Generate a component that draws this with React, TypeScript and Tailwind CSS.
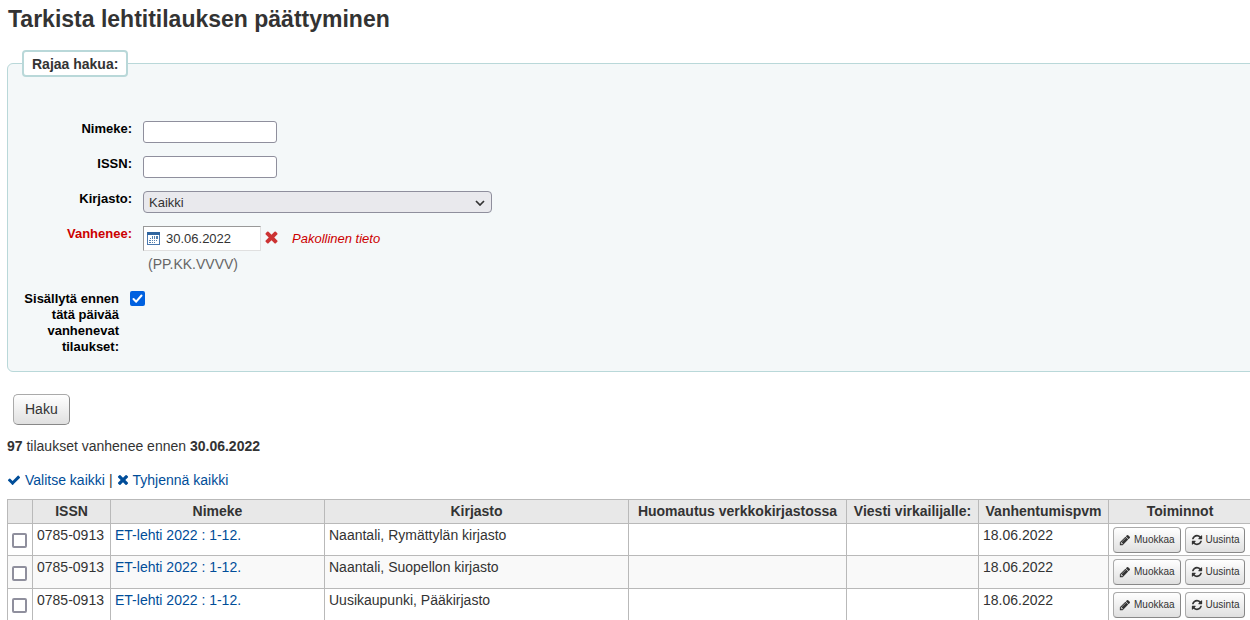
import { useState } from "react";
import type { ReactNode } from "react";

const ICONS = {
  check:
    "M1671 566q0 40-28 68l-724 724-136 136q-28 28-68 28t-68-28l-136-136-362-362q-28-28-28-68t28-68l136-136q28-28 68-28t68 28l294 295 656-657q28-28 68-28t68 28l136 136q28 28 28 68z",
  times:
    "M1490 1322q0 40-28 68l-136 136q-28 28-68 28t-68-28l-294-294-294 294q-28 28-68 28t-68-28l-136-136q-28-28-28-68t28-68l294-294-294-294q-28-28-28-68t28-68l136-136q28-28 68-28t68 28l294 294 294-294q28-28 68-28t68 28l136 136q28 28 28 68t-28 68l-294 294 294 294q28 28 28 68z",
  pencil:
    "M491 1536l91-91-235-235-91 91v107h128v128h107zm523-928q0-22-22-22-10 0-17 7l-542 542q-7 7-7 17 0 22 22 22 10 0 17-7l542-542q7-7 7-17zm-54-192l416 416-832 832h-416v-416zm683 96q0 53-37 90l-166 166-416-416 166-165q36-38 90-38 53 0 91 38l235 234q37 39 37 91z",
  refresh:
    "M1639 1056q0 5-1 7-64 268-268 434.5t-478 166.5q-146 0-282.5-55t-243.5-157l-129 129q-19 19-45 19t-45-19-19-45v-448q0-26 19-45t45-19h448q26 0 45 19t19 45-19 45l-137 137q71 66 161 102t187 36q134 0 250-65t186-179q11-17 53-117 8-23 30-23h192q13 0 22.5 9.5t9.5 22.5zm25-800v448q0 26-19 45t-45 19h-448q-26 0-45-19t-19-45 19-45l138-138q-148-137-349-137-134 0-250 65t-186 179q-11 17-53 117-8 23-30 23h-199q-13 0-22.5-9.5t-9.5-22.5v-7q65-268 270-434.5t480-166.5q146 0 284 55.5t245 156.5l130-129q19-19 45-19t45 19 19 45z",
};

function Icon({ name, className, viewBox = "0 0 1792 1792" }: { name: keyof typeof ICONS; className: string; viewBox?: string }) {
  return (
    <svg viewBox={viewBox} fill="currentColor" aria-hidden="true" className={className}>
      <path d={ICONS[name]} />
    </svg>
  );
}

function CalendarIcon() {
  return (
    <svg viewBox="0 0 13 13" aria-hidden="true" className="h-[13px] w-[13px] shrink-0" shapeRendering="crispEdges">
      <rect width="13" height="13" fill="#4a78ae" />
      <rect x="0" y="0" width="13" height="3" fill="#2f659f" />
      <rect x="1" y="3" width="11" height="9" fill="#ffffff" />
      <path
        d="M5 4h1v2h-1zM7 4h1v2h-1zM9 4h2v2h-2zM3 6h1v1h-1zM5 6h1v1h-1zM7 6h1v1h-1zM9 6h2v1h-2zM2 8h2v1h-2zM5 8h1v1h-1zM7 8h1v1h-1zM9 8h1v1h-1zM2 10h2v1h-2zM5 10h1v1h-1zM7 10h1v1h-1z"
        fill="#5580ad"
      />
    </svg>
  );
}

function Checkbox({ id, label, defaultChecked }: { id: string; label?: string; defaultChecked?: boolean }) {
  return (
    <span className="grid h-[15px] w-[15px] shrink-0">
      <input
        id={id}
        type="checkbox"
        aria-label={label}
        defaultChecked={defaultChecked}
        className="peer col-start-1 row-start-1 h-[15px] w-[15px] appearance-none rounded-[2px] border-2 border-[#8f8f9d] bg-white checked:border-[#0061e0] checked:bg-[#0061e0]"
      />
      <svg
        viewBox="0 0 15 15"
        fill="none"
        stroke="#fff"
        strokeWidth="2"
        strokeLinecap="round"
        strokeLinejoin="round"
        aria-hidden="true"
        className="pointer-events-none invisible col-start-1 row-start-1 h-[15px] w-[15px] peer-checked:visible"
      >
        <path d="M3.5 8l2.7 2.7L11.5 4.5" />
      </svg>
    </span>
  );
}

function Field({ id, label, required, children }: { id: string; label: string; required?: boolean; children: ReactNode }) {
  return (
    <li className="flex items-start gap-[11px]">
      <label
        htmlFor={id}
        className={
          required
            ? "w-[110px] shrink-0 text-right text-[13px] leading-4 font-bold text-[#cc0000]"
            : "w-[110px] shrink-0 text-right text-[13px] leading-4 font-bold text-black"
        }
      >
        {label}
      </label>
      {children}
    </li>
  );
}

const BUTTON =
  "border border-[#aaa] border-r-[#888] border-b-[#888] bg-linear-to-b from-white to-[#e0e0e0] text-[#333] hover:to-[#d0d0d0]";

function RowButton({ icon, children }: { icon: keyof typeof ICONS; children: ReactNode }) {
  return (
    <button type="button" className={`${BUTTON} flex h-[26px] items-center gap-[3px] rounded-[4px] px-[5px] text-[10px]`}>
      <Icon name={icon} className="h-3 w-3" />
      {children}
    </button>
  );
}

const COLUMNS = [
  { title: "", width: "w-[25px]" },
  { title: "ISSN", width: "w-[78px]" },
  { title: "Nimeke", width: "w-[214px]" },
  { title: "Kirjasto", width: "" },
  { title: "Huomautus verkkokirjastossa", width: "w-[218px]" },
  { title: "Viesti virkailijalle:", width: "w-[132px]" },
  { title: "Vanhentumispvm", width: "w-[130px]" },
  { title: "Toiminnot", width: "w-[143px]" },
];

const ROWS = [
  { id: 1, issn: "0785-0913", title: "ET-lehti 2022 : 1-12.", library: "Naantali, Rymättylän kirjasto", expires: "18.06.2022" },
  { id: 2, issn: "0785-0913", title: "ET-lehti 2022 : 1-12.", library: "Naantali, Suopellon kirjasto", expires: "18.06.2022" },
  { id: 3, issn: "0785-0913", title: "ET-lehti 2022 : 1-12.", library: "Uusikaupunki, Pääkirjasto", expires: "18.06.2022" },
];

const CELL = "border border-[#b9b9b9] px-1 pt-[2px] align-top";
const TEXT_INPUT = "h-[22px] w-[134px] rounded-[3px] border border-[#8f8f9d] bg-white px-1 text-[13px]";

export default function App() {
  const [date, setDate] = useState("30.06.2022");

  return (
    <main className="min-h-screen overflow-x-hidden bg-white pl-[7px] font-['Liberation_Sans',Arial,sans-serif] text-[14px] leading-[18px] text-[#333]">
      <h1 className="pt-1 pl-px text-[23px] leading-[30px] font-bold">Tarkista lehtitilauksen päättyminen</h1>

      <form onSubmit={(e) => e.preventDefault()}>
        <fieldset className="-mr-2 mt-4 rounded-[6px] border border-[#b9d8d9] bg-[#f4f8f9] pr-4 pb-4 pl-[14px]">
          <legend className="rounded-[4px] border-2 border-[#b9d8d9] bg-white px-2 pt-1 pb-[2px] leading-[17px] font-bold">
            Rajaa hakua:
          </legend>
          <ol className="flex flex-col gap-[13px] pt-11">
            <Field id="title" label="Nimeke:">
              <input id="title" type="text" className={TEXT_INPUT} />
            </Field>
            <Field id="issn" label="ISSN:">
              <input id="issn" type="text" className={TEXT_INPUT} />
            </Field>
            <Field id="branch" label="Kirjasto:">
              <span className="grid w-[349px] items-center">
                <select
                  id="branch"
                  className="col-start-1 row-start-1 h-[22px] w-full appearance-none rounded-[4px] border border-[#8f8f9d] bg-[#e9e9ed] px-[5px] pt-px text-[13px]"
                >
                  <option>Kaikki</option>
                </select>
                <svg
                  viewBox="0 0 10 6"
                  fill="none"
                  stroke="#333"
                  strokeWidth="1.7"
                  aria-hidden="true"
                  className="pointer-events-none col-start-1 row-start-1 mt-[2px] mr-[7px] h-[6px] w-[10px] justify-self-end"
                >
                  <path d="M1 1l4 4 4-4" />
                </svg>
              </span>
            </Field>
            <Field id="date" label="Vanhenee:" required>
              <div>
                <div className="flex items-center">
                  <span className="flex h-[25px] w-[118px] items-center gap-[6px] border border-[#e0e0e0] border-t-[#999] border-l-[#999] bg-white pl-[3px]">
                    <CalendarIcon />
                    <input
                      id="date"
                      type="text"
                      value={date}
                      onChange={(e) => setDate(e.target.value)}
                      className="w-[90px] min-w-0 bg-transparent text-[13px] outline-none"
                    />
                  </span>
                  <button
                    type="button"
                    aria-label="Tyhjennä päivä"
                    onClick={() => setDate("")}
                    className="ml-1 pb-[2px] text-[#cc3333]"
                  >
                    <Icon name="times" viewBox="256 320 1280 1280" className="h-[13px] w-[13px]" />
                  </button>
                  <span className="ml-[14px] text-[13px] text-[#cc0000] italic">Pakollinen tieto</span>
                </div>
                <div className="mt-1 ml-[5px] text-[#666]">(PP.KK.VVVV)</div>
              </div>
            </Field>
            <li className="flex items-start gap-[11px] pt-[5px]">
              <label htmlFor="include" className="w-[97px] shrink-0 text-right text-[13px] leading-4 font-bold text-black">
                Sisällytä ennen tätä päivää vanhenevat tilaukset:
              </label>
              <Checkbox id="include" defaultChecked />
            </li>
          </ol>
        </fieldset>
        <button type="submit" className={`${BUTTON} mt-[22px] ml-[6px] h-[31px] rounded-[5px] px-[11px] pb-[2px]`}>
          Haku
        </button>
      </form>

      <p className="mt-3">
        <strong>97</strong> tilaukset vanhenee ennen <strong>30.06.2022</strong>
      </p>

      <div className="mt-4 flex items-center gap-1">
        <a href="#valitse" className="flex items-center gap-1 text-[#004d99]">
          <Icon name="check" className="h-[14px] w-[14px]" />
          Valitse kaikki
        </a>
        |
        <a href="#tyhjenna" className="flex items-center gap-1 text-[#004d99]">
          <Icon name="times" viewBox="192 256 1408 1408" className="h-3 w-3" />
          Tyhjennä kaikki
        </a>
      </div>

      <div className="-mr-[2px] mt-[10px]">
        <table className="w-full min-w-[1100px] table-fixed border-collapse">
          <thead>
            <tr className="h-6 bg-[#e8e8e8]">
              {COLUMNS.map((c) => (
                <th key={c.title} scope="col" className={`${c.width} border border-[#b9b9b9] pb-px font-bold whitespace-nowrap`}>
                  {c.title}
                </th>
              ))}
            </tr>
          </thead>
          <tbody>
            {ROWS.map((r) => (
              <tr key={r.id} className="h-8 even:h-[33px] even:bg-[#f9f9f9]">
                <td className="border border-[#b9b9b9] px-1 pt-[2px]">
                  <Checkbox id={`row-${r.id}`} label={`${r.title} ${r.library}`} />
                </td>
                <td className={CELL}>{r.issn}</td>
                <td className={CELL}>
                  <a href="#tilaus" className="text-[#004d99]">
                    {r.title}
                  </a>
                </td>
                <td className={CELL}>{r.library}</td>
                <td className={CELL} />
                <td className={CELL} />
                <td className={CELL}>{r.expires}</td>
                <td className="border border-[#b9b9b9] px-1">
                  <div className="flex gap-1">
                    <RowButton icon="pencil">Muokkaa</RowButton>
                    <RowButton icon="refresh">Uusinta</RowButton>
                  </div>
                </td>
              </tr>
            ))}
          </tbody>
        </table>
      </div>
    </main>
  );
}
